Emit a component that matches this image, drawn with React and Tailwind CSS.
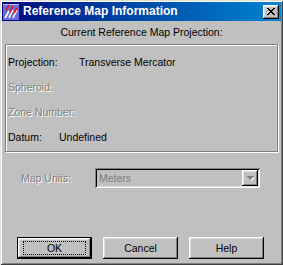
import React from "react";

const raised =
  "shadow-[inset_-1px_-1px_0_#000,inset_1px_1px_0_#fff,inset_-2px_-2px_0_#808080,inset_2px_2px_0_#dfdfdf]";

const disabledText = "text-[#808080] [text-shadow:1px_1px_0_#fff]";

const MapIcon = () => (
  <svg width="16" height="16" viewBox="0 0 16 16" shapeRendering="crispEdges">
    <rect x="0" y="0" width="16" height="16" fill="#6a6ad8" />
    <rect x="0" y="0" width="16" height="1" fill="#c0c0ff" />
    <path d="M2 14 L6 7 M6 14 L10 6 M10 14 L14 6" stroke="#ffffff" strokeWidth="1.6" fill="none" shapeRendering="auto" />
    <path d="M3 6 L6 1 M7 8 L10 2 M11 9 L14 4" stroke="#e01818" strokeWidth="1.6" fill="none" shapeRendering="auto" />
  </svg>
);

const CloseButton = () => (
  <div className={`w-[16px] h-[14px] bg-[#c0c0c0] flex items-center justify-center ${raised}`}>
    <svg width="8" height="7" viewBox="0 0 8 7" shapeRendering="crispEdges">
      <path d="M0 0h2v1H0zM6 0h2v1H6zM1 1h2v1H1zM5 1h2v1H5zM2 2h4v1H2zM3 3h2v1H3zM2 4h4v1H2zM1 5h2v1H1zM5 5h2v1H5zM0 6h2v1H0zM6 6h2v1H6z" fill="#000" />
    </svg>
  </div>
);

const Button = ({ label, isDefault }) => (
  <div
    className={`w-[75px] h-[22px] bg-[#c0c0c0] flex items-center justify-center ${
      isDefault ? "border border-black" : ""
    } ${raised}`}
  >
    {isDefault ? (
      <div className="w-[63px] h-[14px] border border-dotted border-black flex items-center justify-center">
        {label}
      </div>
    ) : (
      label
    )}
  </div>
);

const Row = ({ label, value, labelWidth, disabled }) => (
  <div className="h-[25px] flex items-center">
    <span className={`${disabled ? disabledText : ""}`} style={labelWidth ? { width: labelWidth } : undefined}>
      {label}
    </span>
    {value && <span>{value}</span>}
  </div>
);

export default function App() {
  return (
    <div className="w-[283px] h-[265px] bg-[#c0c0c0] font-['Liberation_Sans',Arial,sans-serif] text-[10.5px] leading-[13px] text-black shadow-[inset_1px_1px_0_#dfdfdf,inset_-1px_-1px_0_#404040,inset_2px_2px_0_#fff,inset_-2px_-2px_0_#808080] pt-[2px] px-[2px] flex flex-col">
      {/* Title bar */}
      <div className="h-[19px] flex items-center bg-gradient-to-r from-[#000080] to-[#1084d0] pl-[1px] pr-[2px]">
        <MapIcon />
        <span className="ml-[4px] text-white font-bold text-[12px]">Reference Map Information</span>
        <div className="ml-auto">
          <CloseButton />
        </div>
      </div>

      <div className="text-center mt-[5px]">Current Reference Map Projection:</div>

      {/* Group box */}
      <div className="mt-[5px] mx-[3px] h-[108px] border border-[#808080] shadow-[1px_1px_0_#fff,inset_1px_1px_0_#fff] pt-[5px] pl-[2px]">
        <Row label="Projection:" value="Transverse Mercator" labelWidth={71} />
        <Row label="Spheroid:" disabled />
        <Row label="Zone Number:" disabled />
        <Row label="Datum:" value="Undefined" labelWidth={51} />
      </div>

      {/* Map units */}
      <div className="mt-[16px] flex items-center h-[20px]">
        <span className={`ml-[19px] w-[74px] ${disabledText}`}>Map Units:</span>
        <div className="w-[165px] h-[20px] bg-[#c0c0c0] shadow-[inset_1px_1px_0_#808080,inset_-1px_-1px_0_#fff,inset_2px_2px_0_#000,inset_-2px_-2px_0_#dfdfdf] flex items-center p-[2px]">
          <span className="flex-1 pl-[2px] text-[#808080]">Meters</span>
          <div className={`w-[16px] h-[16px] bg-[#c0c0c0] flex items-center justify-center ${raised}`}>
            <svg width="7" height="5" viewBox="0 0 7 5" shapeRendering="crispEdges">
              <path d="M1 1h7v1H1zM2 2h5v1H2zM3 3h3v1H3zM4 4h1v1H4z" fill="#fff" />
              <path d="M0 0h7v1H0zM1 1h5v1H1zM2 2h3v1H2zM3 3h1v1H3z" fill="#808080" />
            </svg>
          </div>
        </div>
      </div>

      {/* Buttons */}
      <div className="mt-[49px] flex gap-[11px] pl-[15px]">
        <Button label="OK" isDefault />
        <Button label="Cancel" />
        <Button label="Help" />
      </div>
    </div>
  );
}
